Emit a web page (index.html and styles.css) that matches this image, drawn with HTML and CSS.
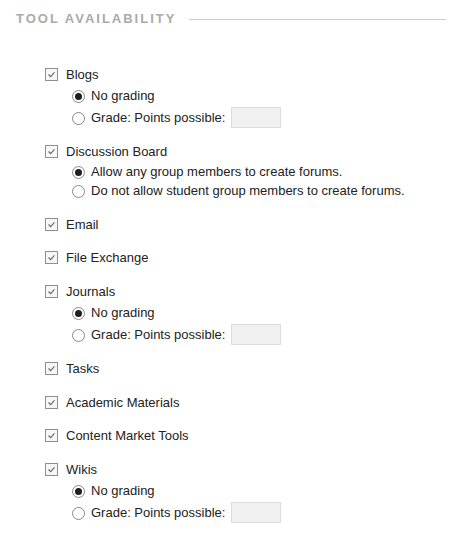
FILE: index.html
```html
<!DOCTYPE html>
<html>
<head>
<meta charset="utf-8">
<link rel="stylesheet" href="styles.css">
</head>
<body>
<div class="panel">
  <div class="header">
    <h2 class="title">TOOL AVAILABILITY</h2>
    <div class="rule"></div>
  </div>
  <ul class="tools">
    <li class="tool">
      <div class="check-row"><span class="cb"><svg viewBox="0 0 13 13"><path d="M3 6.5 L5.5 9 L10 4" fill="none" stroke="#666" stroke-width="1.3"/></svg></span><span>Blogs</span></div>
      <div class="sub grade">
        <div class="radio-row"><span class="rb on"></span><span>No grading</span></div>
        <div class="radio-row"><span class="rb"></span><span>Grade: Points possible:</span><span class="pts"></span></div>
      </div>
    </li>
    <li class="tool">
      <div class="check-row"><span class="cb"><svg viewBox="0 0 13 13"><path d="M3 6.5 L5.5 9 L10 4" fill="none" stroke="#666" stroke-width="1.3"/></svg></span><span>Discussion Board</span></div>
      <div class="sub plain">
        <div class="radio-row"><span class="rb on"></span><span>Allow any group members to create forums.</span></div>
        <div class="radio-row"><span class="rb"></span><span>Do not allow student group members to create forums.</span></div>
      </div>
    </li>
    <li class="tool">
      <div class="check-row"><span class="cb"><svg viewBox="0 0 13 13"><path d="M3 6.5 L5.5 9 L10 4" fill="none" stroke="#666" stroke-width="1.3"/></svg></span><span>Email</span></div>
    </li>
    <li class="tool">
      <div class="check-row"><span class="cb"><svg viewBox="0 0 13 13"><path d="M3 6.5 L5.5 9 L10 4" fill="none" stroke="#666" stroke-width="1.3"/></svg></span><span>File Exchange</span></div>
    </li>
    <li class="tool">
      <div class="check-row"><span class="cb"><svg viewBox="0 0 13 13"><path d="M3 6.5 L5.5 9 L10 4" fill="none" stroke="#666" stroke-width="1.3"/></svg></span><span>Journals</span></div>
      <div class="sub grade">
        <div class="radio-row"><span class="rb on"></span><span>No grading</span></div>
        <div class="radio-row"><span class="rb"></span><span>Grade: Points possible:</span><span class="pts"></span></div>
      </div>
    </li>
    <li class="tool">
      <div class="check-row"><span class="cb"><svg viewBox="0 0 13 13"><path d="M3 6.5 L5.5 9 L10 4" fill="none" stroke="#666" stroke-width="1.3"/></svg></span><span>Tasks</span></div>
    </li>
    <li class="tool">
      <div class="check-row"><span class="cb"><svg viewBox="0 0 13 13"><path d="M3 6.5 L5.5 9 L10 4" fill="none" stroke="#666" stroke-width="1.3"/></svg></span><span>Academic Materials</span></div>
    </li>
    <li class="tool">
      <div class="check-row"><span class="cb"><svg viewBox="0 0 13 13"><path d="M3 6.5 L5.5 9 L10 4" fill="none" stroke="#666" stroke-width="1.3"/></svg></span><span>Content Market Tools</span></div>
    </li>
    <li class="tool">
      <div class="check-row"><span class="cb"><svg viewBox="0 0 13 13"><path d="M3 6.5 L5.5 9 L10 4" fill="none" stroke="#666" stroke-width="1.3"/></svg></span><span>Wikis</span></div>
      <div class="sub grade">
        <div class="radio-row"><span class="rb on"></span><span>No grading</span></div>
        <div class="radio-row"><span class="rb"></span><span>Grade: Points possible:</span><span class="pts"></span></div>
      </div>
    </li>
  </ul>
</div>
</body>
</html>
```
FILE: styles.css
```css
html, body {
  margin: 0;
  padding: 0;
  background: #ffffff;
}
body {
  font-family: "Liberation Sans", Arial, sans-serif;
  font-size: 13px;
  color: #222222;
}
.panel {
  padding-top: 9px;
}
.header {
  display: flex;
  align-items: center;
  gap: 13px;
  padding-left: 16px;
  height: 20px;
}
.title {
  margin: 0;
  font-size: 13px;
  font-weight: bold;
  letter-spacing: 2px;
  color: #aaaaaa;
  line-height: 20px;
  white-space: nowrap;
}
.rule {
  flex: 1;
  height: 1px;
  background: #cccccc;
  margin-right: 4px;
}
.tools {
  list-style: none;
  margin: 35px 0 0 0;
  padding: 0 0 0 45px;
  display: flex;
  flex-direction: column;
  gap: 13.5px;
}
.check-row {
  display: flex;
  align-items: center;
  gap: 8px;
  height: 20px;
}
.cb {
  width: 11px;
  height: 11px;
  border: 1px solid #8f8f8f;
  background: #f7f7f7;
  display: flex;
  flex: none;
}
.cb svg {
  width: 11px;
  height: 11px;
}
.sub {
  padding-left: 27px;
  display: flex;
  flex-direction: column;
}
.radio-row {
  display: flex;
  align-items: center;
  gap: 6px;
}
.sub.grade .radio-row {
  height: 22px;
}
.sub.plain .radio-row {
  height: 19.5px;
}
.rb {
  width: 11px;
  height: 11px;
  border: 1px solid #8a8a8a;
  border-radius: 50%;
  background: #ffffff;
  flex: none;
  position: relative;
  margin-top: 2px;
}
.rb.on::after {
  content: "";
  position: absolute;
  left: 2px;
  top: 2px;
  width: 7px;
  height: 7px;
  border-radius: 50%;
  background: #1e1e1e;
}
.pts {
  width: 48px;
  height: 19px;
  border: 1px solid #dddddd;
  background: #f0f0f0;
  flex: none;
}
```
